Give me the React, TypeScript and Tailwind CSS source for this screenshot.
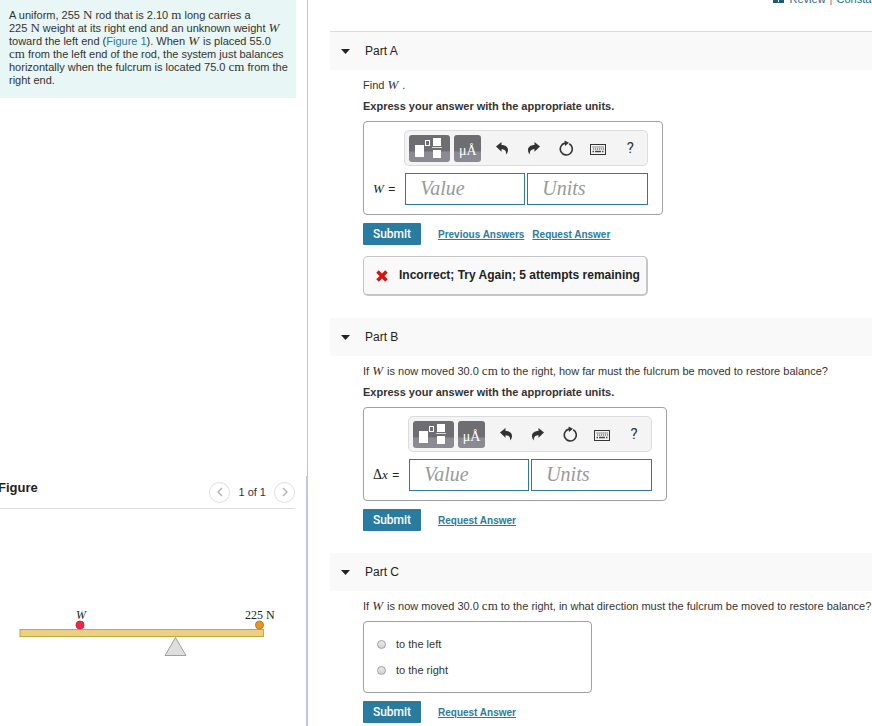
import React from 'react';

const SERIF = "font-['Liberation_Serif',serif]";

const MathVar: React.FC<{ children: React.ReactNode }> = ({ children }) => (
  <i className="mr-px font-['Liberation_Serif',serif] text-[13px] leading-0">{children}</i>
);

const Unit: React.FC<{ children: React.ReactNode }> = ({ children }) => (
  <span className="font-['Liberation_Serif',serif] text-[13px] leading-0">{children}</span>
);

const TemplateIcon = () => (
  <svg width="41" height="27" viewBox="0 0 41 27" fill="none">
    <rect x="6" y="10" width="9" height="12" fill="#fff" />
    <rect x="16.500" y="5.500" width="4" height="5" stroke="#fff" />
    <rect x="24" y="3" width="8" height="8" fill="#fff" />
    <path d="M23 12.500h10" stroke="#ddd" />
    <rect x="24" y="15" width="8" height="8" fill="#fff" />
  </svg>
);

const UndoIcon = () => (
  <svg width="12" height="13" viewBox="0 0 12 13" fill="#333">
    <path d="M0 4.500L5.500 0v3c4.200.1 6.500 2 6.500 5 0 1.700-.7 3.200-2 4.600.5-3.600-.7-5.300-4.500-5.400v2.600z" />
  </svg>
);

const RedoIcon = () => (
  <svg width="12" height="13" viewBox="0 0 12 13" fill="#333">
    <path d="M12 4.500L6.500 0v3C2.300 3.100 0 5 0 8c0 1.700.7 3.200 2 4.600-.5-3.600.7-5.300 4.500-5.400v2.600z" />
  </svg>
);

const ResetIcon = () => (
  <svg width="14" height="16" viewBox="0 0 14 16" fill="none">
    <path d="M10.200 3.700A6 6 0 1 1 6 3.100" stroke="#333" strokeWidth="1.600" />
    <path d="M5.500.5l4.500 2.300-4 3.200z" fill="#333" />
  </svg>
);

const KeyboardIcon = () => (
  <svg width="17" height="13" viewBox="0 0 17 13" fill="none">
    <rect x=".5" y="2.500" width="15" height="10" stroke="#333" />
    <path d="M2.500 5h12M3 7h12" stroke="#444" strokeWidth="1.200" strokeDasharray="1.200 .8" />
    <path d="M2.500 9.500h1.500M5 9.500h6M12 9.500h1.500" stroke="#444" strokeWidth="1.300" />
  </svg>
);

const TOOL_BUTTON = 'flex h-[27px] justify-center rounded-[3px] bg-linear-to-b from-[#6d6d72] from-60% to-[#8b8a93] to-62%';

const tools = [
  { label: 'Undo', icon: UndoIcon },
  { label: 'Redo', icon: RedoIcon },
  { label: 'Reset', icon: ResetIcon },
  { label: 'Keyboard shortcuts', icon: KeyboardIcon },
];

const AnswerBox: React.FC<{ id: string; label: React.ReactNode }> = ({ id, label }) => (
  <div className="mt-1 grid w-fit grid-cols-[auto_auto] gap-x-[10px] gap-y-[7px] rounded-[4px] border border-[#a0a0a0] pt-2 pr-[14px] pb-[9px] pl-[9px]">
    <div className="col-start-2 -ml-px flex h-9 items-center rounded-[5px] border border-[#dcdcdc] bg-[#f4f4f4] pl-1">
      <button type="button" aria-label="Templates" className={`${TOOL_BUTTON} w-[41px]`}>
        <TemplateIcon />
      </button>
      <button type="button" aria-label="Symbols" className={`${TOOL_BUTTON} ${SERIF} ml-1 w-[27px] items-end pb-1 text-[14px] leading-[14px] text-white`}>
        μÅ
      </button>
      <div className="ml-[5px] flex flex-1">
        {tools.map(({ label: name, icon: Icon }) => (
          <button key={name} type="button" aria-label={name} className="flex h-6 w-8 items-center justify-center">
            <Icon />
          </button>
        ))}
        <button type="button" aria-label="Help" className="h-6 w-8 text-center font-[Roboto,sans-serif] text-[15px] text-[#333]">?</button>
      </div>
    </div>
    <label htmlFor={`${id}-value`} className="self-center whitespace-nowrap text-[12px] leading-4 text-[#222]">
      {label} =
    </label>
    <div className="flex gap-[2px]">
      <input
        id={`${id}-value`}
        placeholder="Value"
        className="h-8 w-[120px] border border-[#2a7ba0] bg-white px-[14px] pb-0.5 font-['Liberation_Serif',serif] text-[20px] italic placeholder:text-[#999]"
      />
      <input
        aria-label="Units"
        placeholder="Units"
        className="h-8 w-[121px] border border-[#2a7ba0] bg-white px-[14px] pb-0.5 font-['Liberation_Serif',serif] text-[20px] italic placeholder:text-[#999]"
      />
    </div>
  </div>
);

const Actions: React.FC<{ previous?: boolean }> = ({ previous }) => (
  <div className="mt-2 flex items-center gap-2 text-[10px] font-bold text-[#2a7ba0]">
    <button type="button" className="mr-[9px] h-[22px] w-[58px] rounded-[1px] bg-[#2a7ba0] font-[Roboto,sans-serif] text-[12px] font-medium text-white">
      Submit
    </button>
    {previous && <a href="#previous" className="underline">Previous Answers</a>}
    <a href="#request" className="underline">Request Answer</a>
  </div>
);

const Part: React.FC<{ title: string; first?: boolean; children: React.ReactNode }> = ({ title, first, children }) => (
  <section className="pb-[22px] last:pb-0">
    <h2 className={`bg-[#f9f9f9] ${first ? 'border-t border-[#dcdcdc]' : ''}`}>
      <button type="button" aria-expanded="true" className="flex h-[38px] w-full items-center gap-[15px] pl-[11px] text-[12px] text-[#222]">
        <svg width="9" height="5" viewBox="0 0 9 5" fill="#222">
          <path d="M0 0h9L4.500 5z" />
        </svg>
        {title}
      </button>
    </h2>
    <div className="pt-[5px] pl-[33px] leading-[21px]">{children}</div>
  </section>
);

const Figure = () => (
  <svg className="mt-[91px] block" width="290" height="60" viewBox="0 0 290 60" fill="none">
    <text x="76" y="19" fontSize="12" fontStyle="italic" fill="#222" className={SERIF}>W</text>
    <text x="245" y="19" fontSize="12" fill="#222" className={SERIF}>225 N</text>
    <rect x="20" y="29.500" width="243.500" height="7" fill="#ecd081" stroke="#c9a63f" />
    <circle cx="80" cy="25" r="4" fill="#ee2a48" stroke="#c92840" />
    <circle cx="259.500" cy="25" r="4" fill="#e8961e" stroke="#bd7a1c" />
    <path d="M175.500 37.500L186 55.500h-21z" fill="#dedede" stroke="#a0a0a0" />
  </svg>
);

const App: React.FC = () => {
  return (
    <div className="flex min-h-screen bg-white font-['Liberation_Sans',Arial,sans-serif] text-[11px] text-[#333]">
      <aside className="flex w-[308px] shrink-0 flex-col">
        <div className="flex-1 border-r border-[#b9c9df]">
          <p className="mr-[11px] bg-[#e9f6f6] pt-[9px] pr-2 pb-[11px] pl-[9px] leading-[13px]">
            A uniform, 255 <Unit>N</Unit> rod that is 2.10 <Unit>m</Unit> long carries a<br />
            225 <Unit>N</Unit> weight at its right end and an unknown weight <MathVar>W</MathVar><br />
            toward the left end (<a href="#figure" className="text-[#1f7ba6]">Figure 1</a>). When <MathVar>W</MathVar> is placed 55.0<br />
            <Unit>cm</Unit> from the left end of the rod, the system just balances<br />
            horizontally when the fulcrum is located 75.0 <Unit>cm</Unit> from the<br />
            right end.
          </p>
        </div>

        <div id="figure" className="h-[250px] border-r-2 border-[#b9c9df]">
          <div className="mr-[11px] flex h-[33px] items-center border-b border-[#dcdcdc]">
            <h2 className="-ml-0.5 flex-1 pb-2 text-[13px] font-bold text-[#222]">Figure</h2>
            <button type="button" aria-label="Previous figure" className="flex size-[21px] items-center justify-center rounded-full border border-[#dedede]">
              <svg width="6" height="10" viewBox="0 0 6 10" fill="none" stroke="#b5b5b5" strokeWidth="1.500">
                <path d="M5 1L1 5l4 4" />
              </svg>
            </button>
            <span className="mx-2 text-[11px]">1 of 1</span>
            <button type="button" aria-label="Next figure" className="flex size-[21px] items-center justify-center rounded-full border border-[#dedede]">
              <svg width="6" height="10" viewBox="0 0 6 10" fill="none" stroke="#b5b5b5" strokeWidth="1.500">
                <path d="M1 1l4 4-4 4" />
              </svg>
            </button>
          </div>
          <Figure />
        </div>
      </aside>

      <main className="min-w-0 flex-1 pb-[2px] pl-[22px]">
        <div className="mb-6 flex h-[7px] items-end justify-end overflow-hidden text-[11px] leading-4 whitespace-nowrap text-[#1d6a88]">
          <svg className="mr-[6px] mb-1 shrink-0" width="11" height="9" viewBox="0 0 11 9" fill="#1d5c78">
            <path d="M0 0h5v8H0zM6 0h5v8H6z" />
            <path d="M0 8.500h11" stroke="#1d5c78" />
          </svg>
          <a href="#review">Review</a>
          <span className="mx-1 text-[#777]">|</span>
          <a href="#constants" className="-mr-[14px]">Constants</a>
        </div>

        <Part title="Part A" first>
          <p>Find <MathVar>W</MathVar> .</p>
          <p className="font-bold">Express your answer with the appropriate units.</p>
          <AnswerBox id="part-a" label={<MathVar>W</MathVar>} />
          <Actions previous />
          <div role="status" className="mt-[11px] flex h-10 w-fit items-center rounded-[5px] border border-r-2 border-b-2 border-[#c6c6c6] bg-[#f9f9f9] pr-[6px] pl-3 text-[12px] font-bold text-[#222]">
            <svg className="mr-[11px]" width="12" height="12" viewBox="0 0 12 12" stroke="#d8120f" strokeWidth="3.500">
              <path d="M1.500 1.500l9 9M10.500 1.500l-9 9" />
            </svg>
            Incorrect; Try Again; 5 attempts remaining
          </div>
        </Part>

        <Part title="Part B">
          <p>If <MathVar>W</MathVar> is now moved 30.0 <Unit>cm</Unit> to the right, how far must the fulcrum be moved to restore balance?</p>
          <p className="font-bold">Express your answer with the appropriate units.</p>
          <AnswerBox id="part-b" label={<><span className={`${SERIF} text-[14px]`}>Δ</span><MathVar>x</MathVar></>} />
          <Actions />
        </Part>

        <Part title="Part C">
          <p className="sm:whitespace-nowrap">If <MathVar>W</MathVar> is now moved 30.0 <Unit>cm</Unit> to the right, in what direction must the fulcrum be moved to restore balance?</p>
          <fieldset className="mt-1 w-[229px] rounded-[4px] border border-[#a0a0a0] py-[9px] pl-[13px] leading-[26px]">
            {['to the left', 'to the right'].map(option => (
              <label key={option} className="flex items-center gap-[10px]">
                <input
                  type="radio"
                  name="direction"
                  className="size-[9px] appearance-none rounded-full border border-[#a0a0a0] bg-linear-to-b from-[#e8e8e8] to-[#d4d4d4] checked:bg-[#555]"
                />
                {option}
              </label>
            ))}
          </fieldset>
          <Actions />
        </Part>
      </main>
    </div>
  );
};

export default App;
